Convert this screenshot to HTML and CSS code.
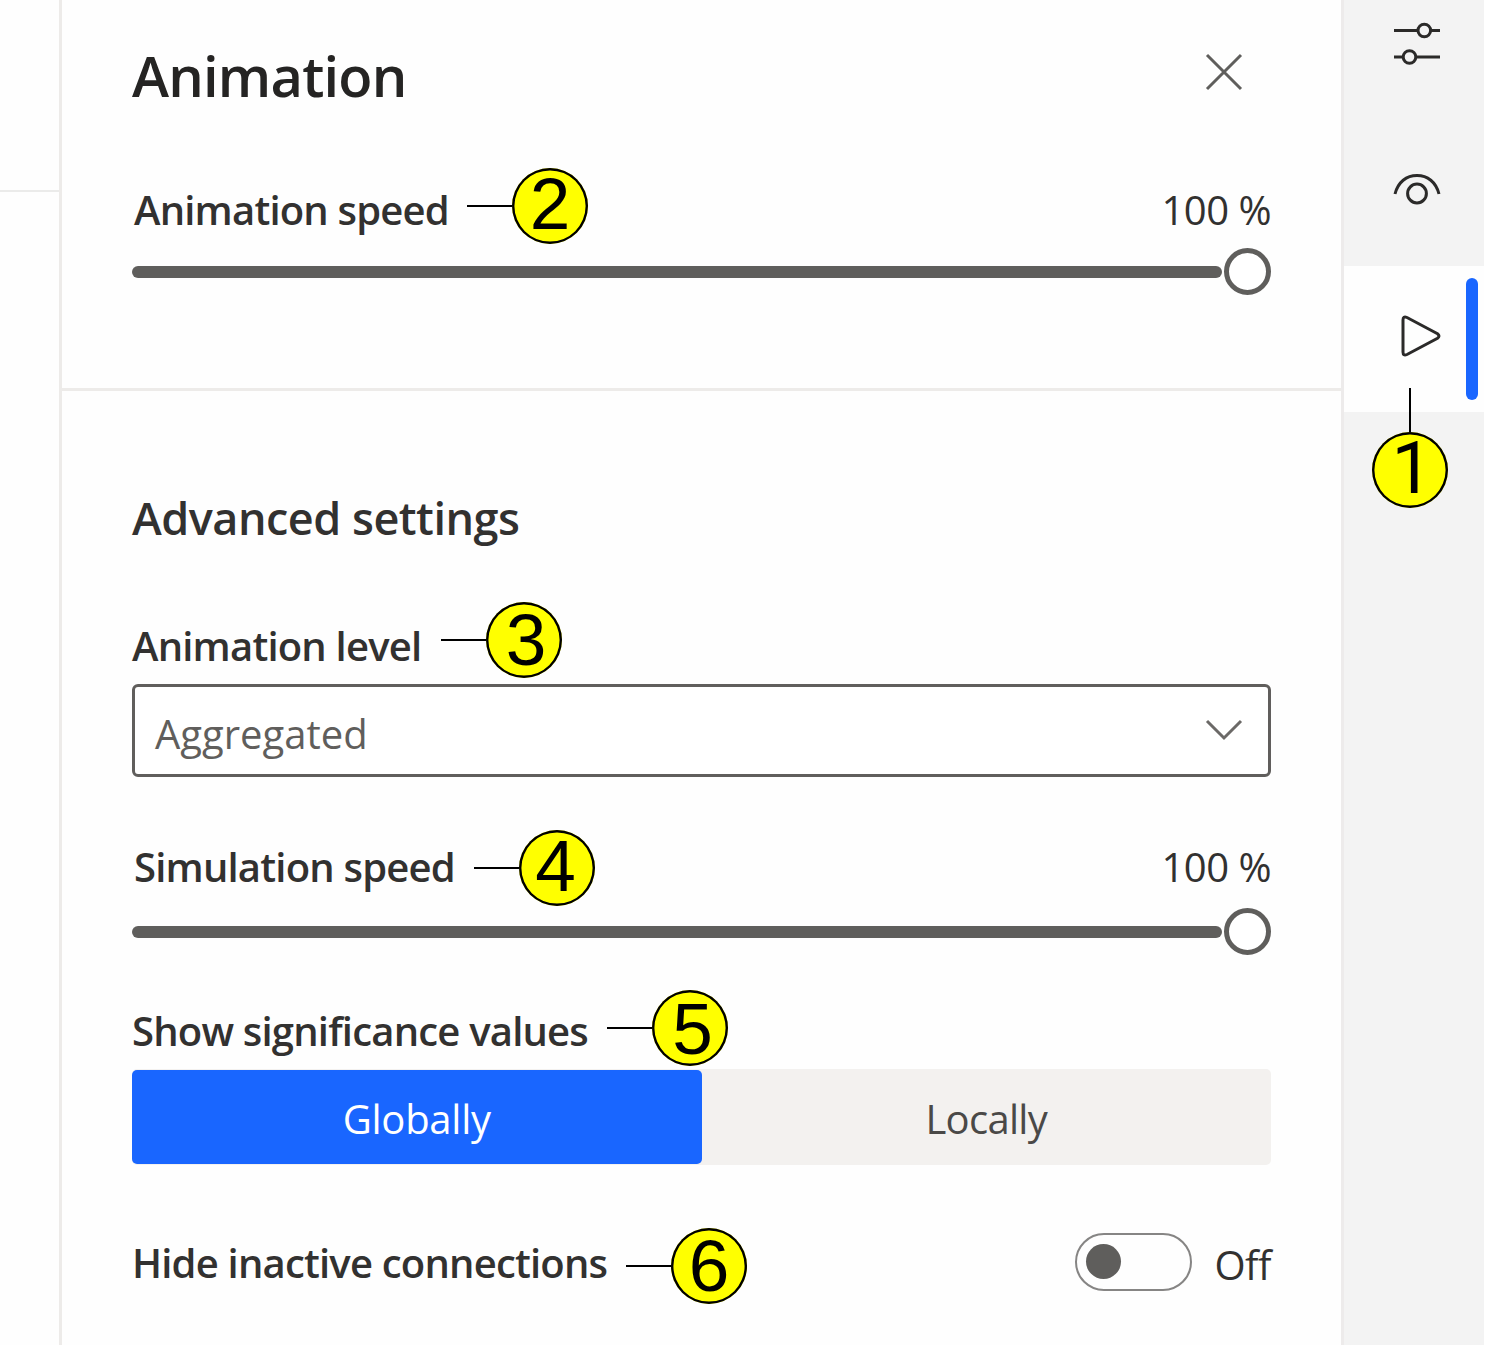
FILE: index.html
```html
<!DOCTYPE html>
<html lang="en">
<head>
<meta charset="utf-8">
<title>Animation</title>
<link rel="stylesheet" href="styles.css">
</head>
<body>
<div class="app">
  <div class="canvas"><div class="canvas-top"></div></div>
  <main class="panel">
    <section class="basic">
      <header class="head">
        <h1 class="title">Animation</h1>
        <svg class="close" width="38" height="38" viewBox="0 0 38 38"><path d="M2 2L36 36M36 2L2 36"/></svg>
      </header>
      <div class="row speed"><span class="label">Animation speed</span><span class="value">100 %</span></div>
      <div class="slider"><div class="track"></div><div class="thumb"></div></div>
    </section>
    <section class="advanced">
      <h2 class="subtitle">Advanced settings</h2>
      <div class="row level"><span class="label">Animation level</span></div>
      <div class="select"><span>Aggregated</span><svg class="chev" width="38" height="22" viewBox="0 0 38 22"><path d="M2 2L19 19L36 2"/></svg></div>
      <div class="row sim"><span class="label">Simulation speed</span><span class="value">100 %</span></div>
      <div class="slider sim-slider"><div class="track"></div><div class="thumb"></div></div>
      <div class="row show"><span class="label">Show significance values</span></div>
      <div class="segment"><div class="seg on">Globally</div><div class="seg local">Locally</div></div>
      <div class="row hide"><span class="label">Hide inactive connections</span><div class="switch"><div class="toggle"><div class="dot"></div></div><span class="off">Off</span></div></div>
    </section>
  </main>
  <nav class="rail">
    <div class="tab tab-settings"><svg width="48" height="44" viewBox="0 0 48 44"><path d="M1 9.5H25M37 9.5H47M1 36H10M23 36H47"/><circle cx="31.3" cy="9.5" r="6.3"/><circle cx="16.5" cy="36" r="6.3"/></svg></div>
    <div class="tab tab-view"><svg width="48" height="34" viewBox="0 0 48 34"><path d="M2 23C5 11 13.500 4.500 24 4.500S43 11 46 23"/><circle cx="24" cy="22.500" r="9.400"/></svg></div>
    <div class="tab tab-play"><svg width="42" height="44" viewBox="0 0 42 44"><path d="M3 6V38Q3 42.300 7 40.500L37.500 24.300Q40.500 22 37.500 19.700L7 3.500Q3 1.700 3 6Z"/></svg><div class="marker"></div></div>
  </nav>
  <div class="callout c1"><i></i><b>1</b></div>
  <div class="callout c2"><i></i><b>2</b></div>
  <div class="callout c3"><i></i><b>3</b></div>
  <div class="callout c4"><i></i><b>4</b></div>
  <div class="callout c5"><i></i><b>5</b></div>
  <div class="callout c6"><i></i><b>6</b></div>
</div>
</body>
</html>
```
FILE: styles.css
```css
* { box-sizing: border-box; }
body { margin: 0; background: #fff; font-family: "Open Sans", "Noto Sans", sans-serif; color: #323130; overflow: hidden; }
.app { position: relative; display: flex; width: 1484px; height: 1345px; background: #fefefe; }
.canvas { width: 59px; }
.canvas-top { height: 192px; border-bottom: 2px solid #ebebea; }
.panel { width: 1285px; border-left: 3px solid #edebe9; border-right: 3px solid #edebeb; }
.basic { height: 391px; padding: 37px 70px 0; border-bottom: 3px solid #edebe9; }
.advanced { padding: 97px 70px 0; }
.head { display: flex; justify-content: space-between; height: 76px; padding-right: 28px; }
.title, .subtitle { margin: 0; font-weight: 560; white-space: nowrap; }
.title { font-size: 56px; line-height: 76px; letter-spacing: -.8px; color: #252423; }
.subtitle { font-size: 45px; line-height: 60px; letter-spacing: -.5px; }
.close { margin-top: 16px; }
svg { fill: none; stroke: #5f5e5c; stroke-width: 3; }
.row { display: flex; justify-content: space-between; height: 54px; font-size: 40px; line-height: 54px; white-space: nowrap; }
.label { font-weight: 560; letter-spacing: -.8px; }
.value { letter-spacing: -.5px; }
.speed { margin-top: 70px; }
.speed, .sim { padding-left: 2px; }
.slider { display: flex; align-items: center; gap: 2px; height: 47px; margin-top: 11px; }
.track { flex: 1; height: 12px; border-radius: 6px; background: #5f5e5c; }
.thumb { width: 47px; height: 47px; border: 5px solid #5f5e5c; border-radius: 50%; background: #fff; }
.level { margin-top: 71px; }
.select { display: flex; align-items: center; justify-content: space-between; height: 93px; margin-top: 11px; padding: 5px 25px 0 20px; border: 3px solid #605e5c; border-radius: 6px; background: #fff; font-size: 40px; color: #605e5c; }
.chev { margin-top: -6px; stroke: #6b6967; }
.sim { margin-top: 63px; }
.sim-slider { margin-top: 14px; }
.show { margin-top: 49px; }
.segment { display: flex; height: 96px; margin-top: 11px; border-radius: 5px; background: #f3f1ef; font-size: 40px; }
.seg { flex: 1; display: flex; align-items: center; justify-content: center; padding-top: 2px; letter-spacing: -.25px; color: #4a4947; }
.local { letter-spacing: -.7px; }
.on { margin: 1px 0; border-radius: 5px; background: #1966ff; color: #fff; }
.hide { margin-top: 71px; }
.switch { display: flex; align-items: center; gap: 22px; height: 59px; margin-top: -4px; }
.toggle { display: flex; align-items: center; width: 117px; height: 58px; padding-left: 9px; border: 2px solid #868584; border-radius: 29px; }
.dot { width: 35px; height: 35px; border-radius: 50%; background: #5f5e5c; }
.off { padding-top: 6px; letter-spacing: -.5px; }
.rail { width: 140px; background: #f3f3f3; }
.tab { position: relative; display: flex; justify-content: center; padding-left: 5px; }
.tab svg { stroke: #2b2a29; }
.tab-settings { height: 119px; padding-top: 21px; }
.tab-view { height: 147px; padding-top: 52px; }
.tab-play { height: 146px; padding: 48px 0 0 13px; background: #fefefe; }
.marker { position: absolute; right: 6px; top: 12px; width: 12px; height: 122px; border-radius: 6px; background: #1966ff; }
.callout { position: absolute; display: flex; align-items: center; font-family: "Liberation Sans", Arial, sans-serif; color: #000; }
.callout i { width: 45px; height: 2.500px; background: #000; }
.callout b { width: 76px; height: 76px; border-radius: 50%; background: #ff0; box-shadow: inset 0 0 0 2.400px #000; font-size: 73px; font-weight: 400; line-height: 75px; text-align: center; }
.c1 { left: 1372px; top: 388px; flex-direction: column; }
.c1 i { width: 2.500px; height: 44px; }
.c1 b { padding-left: 4px; font-family: Roboto, sans-serif; line-height: 73px; }
.c2 { left: 467px; top: 168px; }
.c2 b { line-height: 71px; }
.c3 { left: 441px; top: 602px; }
.c3 b { padding-left: 4px; }
.c4 { left: 474px; top: 830px; }
.c4 b { padding-right: 3px; line-height: 72px; }
.c5 { left: 607px; top: 990px; }
.c5 b { padding-left: 5px; line-height: 77px; }
.c6 { left: 626px; top: 1228px; }
```
